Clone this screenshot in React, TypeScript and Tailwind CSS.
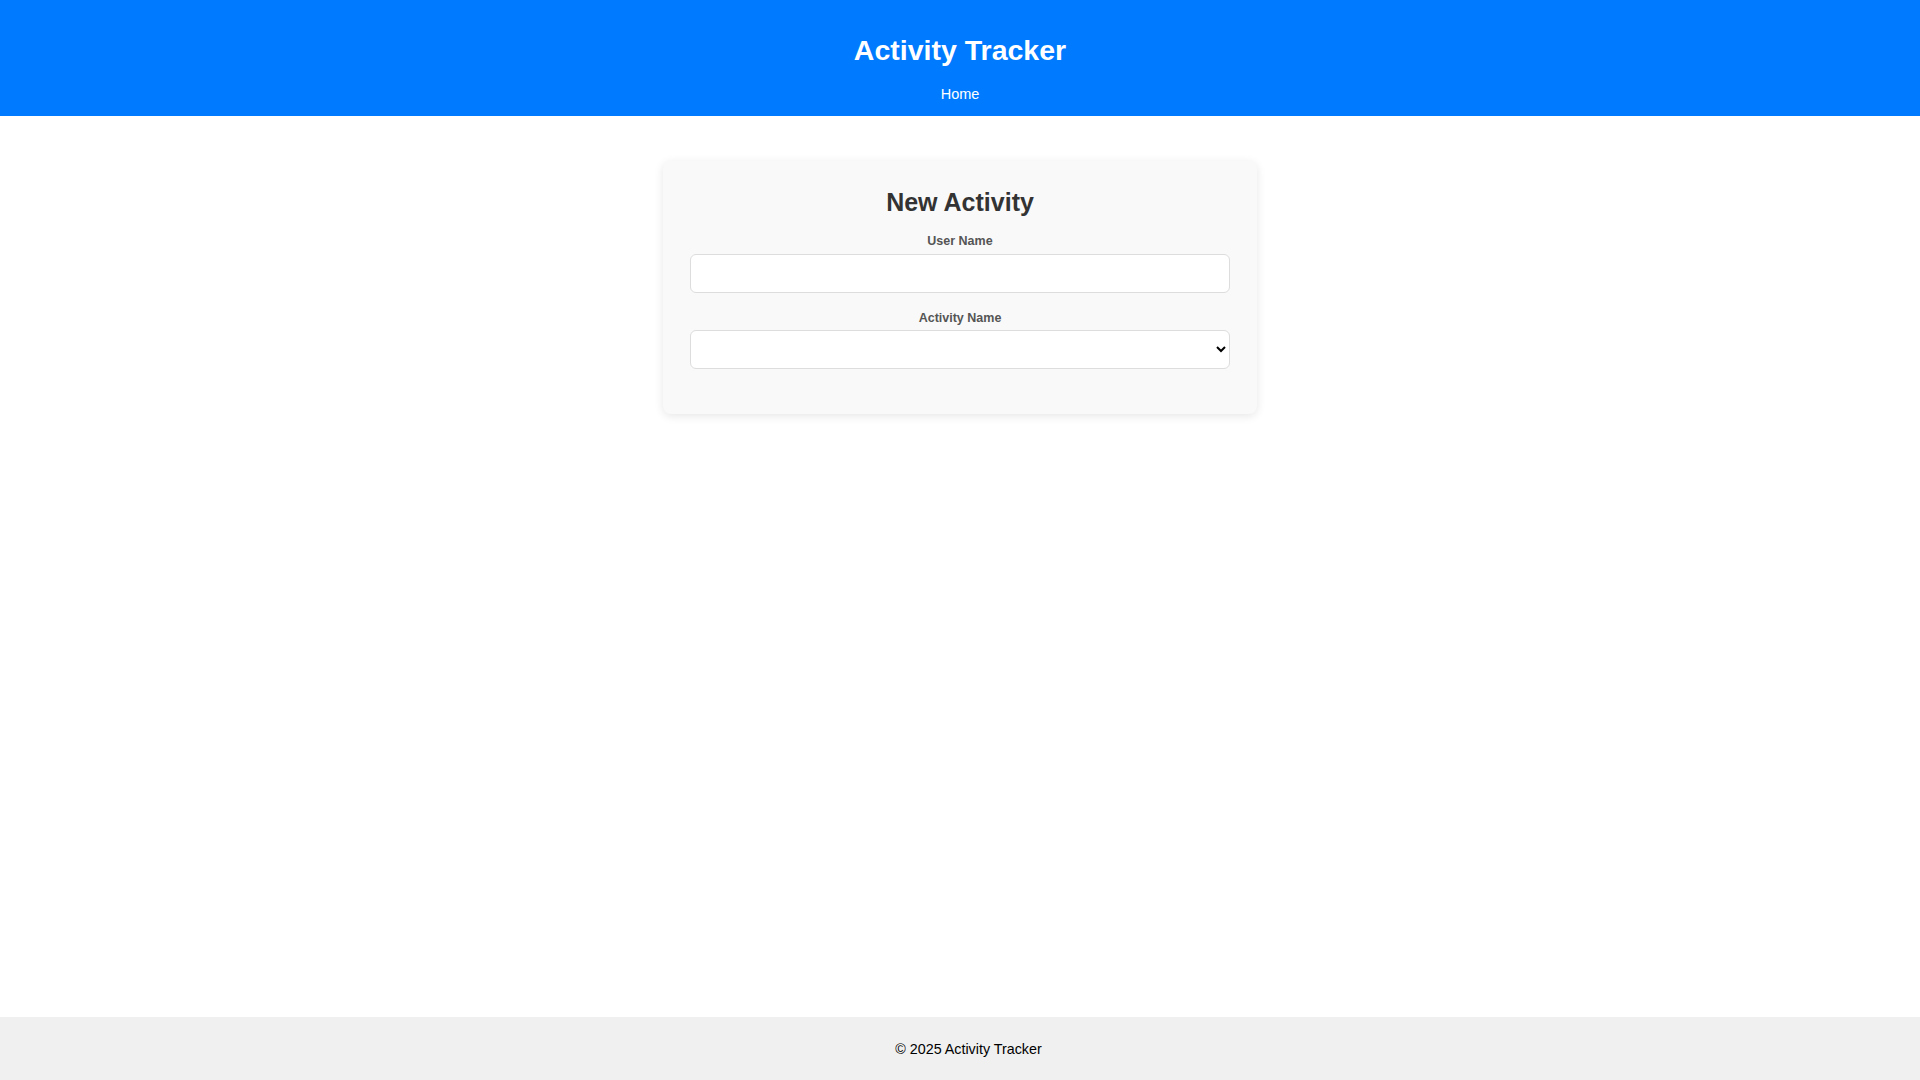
const App = () => {
  return (
    <div className="min-h-screen flex flex-col bg-white font-['Liberation_Sans',Arial,sans-serif]">
      {/* Header */}
      <header className="h-[116px] bg-[#007bff] text-white text-center pt-[34px]">
        <h1 className="text-[28.5px] leading-[32px] font-bold">Activity Tracker</h1>
        <nav className="mt-[20px] text-[14.5px] leading-[16px]">
          <a href="#" className="text-white">
            Home
          </a>
        </nav>
      </header>

      {/* Main */}
      <main className="flex-1">
        <div className="w-[594px] mx-auto mt-[45px] bg-[#f9f9f9] rounded-lg shadow-[0_2px_10px_rgba(0,0,0,0.1)] px-[27px] pt-[27px] pb-[45px]">
          <h2 className="text-[25px] leading-[28px] font-bold text-[#333] text-center">
            New Activity
          </h2>
          <form className="flex flex-col">
            <label
              htmlFor="userName"
              className="mt-[18px] mb-[5px] text-[12.5px] leading-[15px] font-bold text-[#555] text-center"
            >
              User Name
            </label>
            <input
              id="userName"
              type="text"
              className="h-[39px] w-full bg-white border border-[#ddd] rounded-[6px] px-3 text-[14px] outline-none"
            />
            <label
              htmlFor="activityName"
              className="mt-[18px] mb-[4px] text-[12.5px] leading-[15px] font-bold text-[#555] text-center"
            >
              Activity Name
            </label>
            <select
              id="activityName"
              className="h-[39px] w-full bg-white border border-[#ddd] rounded-[6px] px-2 text-[14px] text-black outline-none"
            >
              <option value=""></option>
            </select>
          </form>
        </div>
      </main>

      {/* Footer */}
      <footer className="h-[63px] bg-[#f0f0f0] flex items-center justify-center pl-[17px]">
        <p className="text-[14.3px] leading-[16px] text-black">© 2025 Activity Tracker</p>
      </footer>
    </div>
  );
};

export default App;
